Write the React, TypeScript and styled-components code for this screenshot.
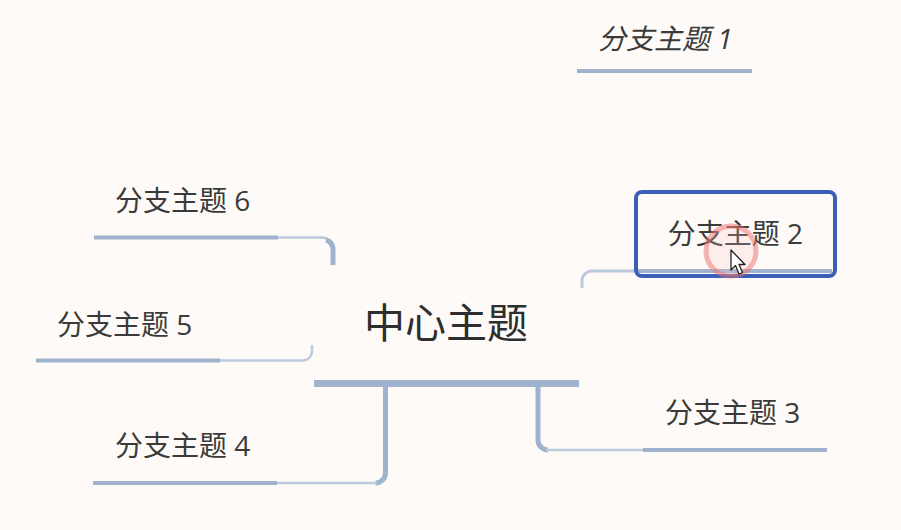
import React from 'react'
import styled, { createGlobalStyle } from 'styled-components'

const GlobalStyle = createGlobalStyle`
    html, body {
        margin: 0;
        padding: 0;
        background: #fdfaf7;
    }
    #root {
        width: 901px;
        height: 530px;
    }
`

const THICK = '#9fb3ce'
const THIN = '#bccadc'

type TopicProps = { x: number; y: number; size?: number; italic?: boolean }

const branches: { label: string; x: number; y: number; italic?: boolean }[] = [
    { label: '分支主题 1', x: 598, y: 22, italic: true },
    { label: '分支主题 6', x: 115, y: 184 },
    { label: '分支主题 5', x: 57, y: 308 },
    { label: '分支主题 4', x: 115, y: 429 },
    { label: '分支主题 3', x: 665, y: 396 },
]

export default function App() {
    return (
        <>
            <GlobalStyle />
            <Canvas>
                <Connectors width="901" height="530" viewBox="0 0 901 530">
                    {/* 分支主题 1 */}
                    <line x1="577" y1="71" x2="752" y2="71" stroke={THICK} strokeWidth="4" />

                    {/* 分支主题 6 */}
                    <line x1="94" y1="237.5" x2="278" y2="237.5" stroke={THICK} strokeWidth="4" />
                    <path d="M278 237.5 H322 A11 11 0 0 1 333 248.5" fill="none" stroke={THIN} strokeWidth="2.5" />
                    <path d="M326 240 A10 10 0 0 1 333 249 V265" fill="none" stroke={THICK} strokeWidth="5" />

                    {/* 分支主题 5 */}
                    <line x1="36" y1="360.5" x2="220" y2="360.5" stroke={THICK} strokeWidth="4" />
                    <path d="M220 360.5 H303 A9 9 0 0 0 312 351.5 V345" fill="none" stroke={THIN} strokeWidth="2.5" />

                    {/* 中心主题 */}
                    <line x1="314" y1="383.5" x2="579" y2="383.5" stroke={THICK} strokeWidth="7" />

                    {/* 分支主题 4 */}
                    <path d="M385.5 386 V473 A10 10 0 0 1 375.5 483" fill="none" stroke={THICK} strokeWidth="5" />
                    <path d="M377 483 H277" fill="none" stroke={THIN} strokeWidth="2.5" />
                    <line x1="93" y1="483" x2="277" y2="483" stroke={THICK} strokeWidth="4" />

                    {/* 分支主题 3 */}
                    <path d="M538 386 V440 A10 10 0 0 0 548 450" fill="none" stroke={THICK} strokeWidth="5" />
                    <path d="M546 450 H643" fill="none" stroke={THIN} strokeWidth="2.5" />
                    <line x1="643" y1="450" x2="827" y2="450" stroke={THICK} strokeWidth="4" />

                    {/* 分支主题 2 */}
                    <path d="M636 271 H592 A10 10 0 0 0 582 281 V288" fill="none" stroke={THIN} strokeWidth="3" />
                    <line x1="638" y1="271" x2="832" y2="271" stroke={THICK} strokeWidth="4" />
                </Connectors>

                <Center x={364} y={298}>中心主题</Center>

                {branches.map((b) => (
                    <Topic key={b.label} x={b.x} y={b.y} italic={b.italic}>
                        {b.label}
                    </Topic>
                ))}

                <Selected>
                    <SelectedLabel>分支主题 2</SelectedLabel>
                </Selected>

                <CursorMark width="70" height="72" viewBox="0 0 70 72">
                    <circle cx="35" cy="34" r="25" fill="rgba(255,196,196,0.22)" stroke="rgba(236,112,112,0.5)" strokeWidth="5" />
                    <path
                        d="M35 33 L35 53 L39.5 48.5 L43 57 L46.5 55.5 L43 47.5 L49 47.5 Z"
                        fill="#ffffff"
                        stroke="#222"
                        strokeWidth="1.3"
                        strokeLinejoin="round"
                    />
                </CursorMark>
            </Canvas>
        </>
    )
}

const Canvas = styled.div`
    position: relative;
    width: 901px;
    height: 530px;
    overflow: hidden;
    background: #fdfaf7;
    font-family: 'Open Sans', 'Noto Sans CJK SC', sans-serif;
    color: #3a3a3a;
`

const Connectors = styled.svg`
    position: absolute;
    left: 0;
    top: 0;
`

const Topic = styled.div<TopicProps>`
    position: absolute;
    left: ${(p) => p.x}px;
    top: ${(p) => p.y}px;
    font-size: ${(p) => p.size ?? 28}px;
    line-height: 1.2;
    white-space: nowrap;
    font-style: ${(p) => (p.italic ? 'italic' : 'normal')};
`

const Center = styled(Topic).attrs({ size: 41 })`
    color: #2e2e2e;
`

const Selected = styled.div`
    position: absolute;
    left: 634px;
    top: 190px;
    width: 203px;
    height: 88px;
    box-sizing: border-box;
    border: 4px solid #3b5fb6;
    border-radius: 8px;
    display: flex;
    align-items: flex-start;
    justify-content: center;
    padding-top: 23px;
`

const SelectedLabel = styled.span`
    font-size: 28px;
    line-height: 1.2;
    white-space: nowrap;
`

const CursorMark = styled.svg`
    position: absolute;
    left: 696px;
    top: 217px;
    pointer-events: none;
`
